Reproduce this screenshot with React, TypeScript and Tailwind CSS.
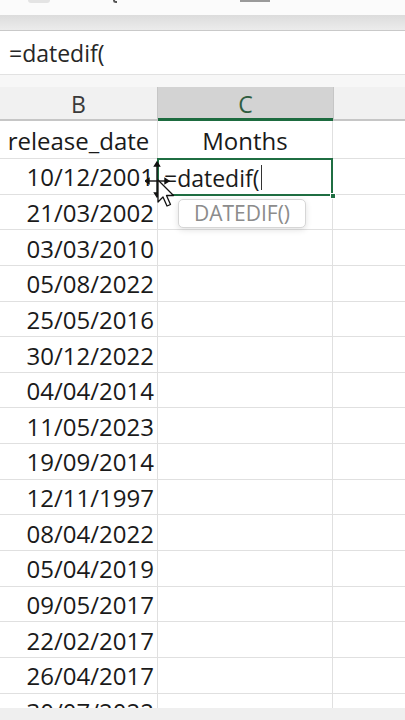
import React from "react";

const dates = [
  "10/12/2001",
  "21/03/2002",
  "03/03/2010",
  "05/08/2022",
  "25/05/2016",
  "30/12/2022",
  "04/04/2014",
  "11/05/2023",
  "19/09/2014",
  "12/11/1997",
  "08/04/2022",
  "05/04/2019",
  "09/05/2017",
  "22/02/2017",
  "26/04/2017",
  "30/07/2022",
];

function MoveCursor() {
  return (
    <svg width="34" height="48" viewBox="0 0 34 48" className="absolute left-[-13px] top-[-14px]">
      <g stroke="#111" strokeWidth="1.4" fill="#111">
        <line x1="12" y1="3" x2="12" y2="34" />
        <line x1="2" y1="20" x2="22" y2="20" />
        <polygon points="12,1 9.5,5 14.5,5" />
        <polygon points="12,36 9.5,32 14.5,32" />
        <polygon points="0,20 4,17.5 4,22.5" />
        <polygon points="24,20 20,17.5 20,22.5" />
      </g>
      <path
        d="M13 19 L13 41 L18 36 L22 45 L25.5 43.5 L21.5 34.5 L28.5 34.5 Z"
        fill="#fff"
        stroke="#111"
        strokeWidth="1.3"
        strokeLinejoin="round"
      />
    </svg>
  );
}

export default function App() {
  return (
    <div
      className="relative flex h-[720px] w-[405px] flex-col overflow-hidden bg-white text-[#1a1a1a]"
      style={{ fontFamily: '"Open Sans", "Liberation Sans", sans-serif' }}
    >
      <div className="relative h-[15px] shrink-0 bg-[#fbfbfb]">
        <div className="absolute left-[28px] top-0 h-[3px] w-[22px] rounded-b bg-[#e4e4e4]" />
        <div className="absolute left-[113px] top-0 h-[3px] w-[4px] rounded-bl-full border-b-2 border-l-2 border-[#555]" />
        <div className="absolute left-[240px] top-0 h-[2px] w-[30px] bg-[#9a9a9a]" />
      </div>
      <div className="h-[16px] shrink-0 border-b border-[#c9c9c9] bg-gradient-to-b from-[#dcdcdc] to-[#ececec]" />

      <div className="flex h-[44px] shrink-0 items-center border-b border-[#e2e2e2] bg-white pl-[9px] pt-[1px] text-[23px] text-[#262626]">
        =datedif(
      </div>
      <div className="h-[12px] shrink-0 bg-[#f7f7f7]" />

      <div className="flex h-[34px] shrink-0 text-[23px]">
        <div className="flex w-[158px] items-center justify-center border-b-2 border-r border-[#c6c6c6] bg-[#f1f1f1] pt-[3px] text-[#3a3a3a]">
          B
        </div>
        <div className="flex w-[175px] items-center justify-center border-b-[3px] border-b-[#1d6b3f] bg-[#d3d3d3] pt-[3px] text-[#2f5d40]">
          C
        </div>
        <div className="flex-1 border-b-2 border-l border-[#c6c6c6] bg-[#f1f1f1]" />
      </div>

      <div className="relative min-h-0 flex-1 overflow-hidden text-[24px]">
        <div className="flex h-[38px]">
          <div className="flex w-[158px] items-center justify-center border-b border-r border-[#e0e0e0] pt-[2px]">
            release_date
          </div>
          <div className="flex w-[175px] items-center justify-center border-b border-r border-[#e0e0e0] pt-[2px]">
            Months
          </div>
          <div className="flex-1 border-b border-[#e0e0e0]" />
        </div>
        {dates.map((d, i) => (
          <div key={d + i} className="flex h-[35.65px]">
            <div className="flex w-[158px] items-center justify-end border-b border-r border-[#e0e0e0] pr-[3px] pt-[2px]">
              {d}
            </div>
            <div className="relative w-[175px] border-b border-r border-[#e0e0e0]">
              {i === 0 && (
                <>
                  <div className="absolute inset-x-[-1px] bottom-[-2px] top-[-1px] z-10 flex items-center border-2 border-[#1f6e42] bg-white pl-[5px] pt-[2px] text-[23px]">
                    <span>=datedif(</span>
                    <span className="ml-[1px] h-[25px] w-[1.5px] bg-[#333]" />
                    <div className="absolute bottom-[-5px] right-[-5px] h-[6px] w-[6px] border border-white bg-[#1f6e42]" />
                  </div>
                  <div className="absolute left-[20px] top-[40px] z-20 flex h-[29px] w-[128px] items-center justify-center rounded-[5px] border border-[#d6d6d6] bg-white text-[21px] text-[#8c8c8c] shadow-[0_2px_6px_rgba(0,0,0,0.12)]">
                    DATEDIF()
                  </div>
                  <div className="absolute left-0 top-[16px] z-30 h-0 w-0">
                    <MoveCursor />
                  </div>
                </>
              )}
            </div>
            <div className="flex-1 border-b border-[#e0e0e0]" />
          </div>
        ))}
      </div>

      <div className="h-[12px] shrink-0 bg-[#efefef]" />
    </div>
  );
}
